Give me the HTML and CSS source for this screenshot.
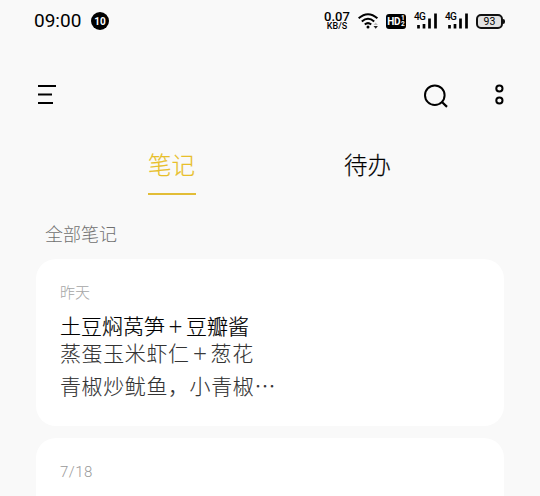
FILE: index.html
```html
<!DOCTYPE html>
<html lang="zh-CN">
<head>
<meta charset="utf-8">
<title>笔记</title>
<link rel="stylesheet" href="styles.css">
</head>
<body>
<header class="status">
  <span class="clock">09:00</span>
  <span class="badge">10</span>
  <div class="status-right">
    <div class="speed"><b>0.07</b><span>KB/S</span></div>
    <svg class="wifi" width="21" height="18" viewBox="0 0 21 18">
      <g fill="none" stroke="#000" stroke-width="2">
        <path d="M.6 6.3Q10 -1.9 19.4 6.3"/><path d="M3.8 9.6Q10 4 16.2 9.6"/><path d="M6.8 12.6Q10 9.6 13.2 12.6"/>
      </g>
      <circle cx="10" cy="15" r="1.5"/>
      <path d="M15.5 13l2.2-2.5 2.2 2.5z" fill="#bbb"/><path d="M15.5 14h4.4l-2.2 2.8z" fill="#222"/>
    </svg>
    <div class="hd"><span class="hd-text">HD</span><span class="hd-nums"><i>1</i><i>2</i></span></div>
    <div class="signal"><span class="net">4G</span><svg width="24" height="16" viewBox="0 0 24 16"><path d="M4.5 12v3.5M10 11v4.5M15.5 5.5v10M21.5 .5v15" stroke="#000" stroke-width="2.7"/></svg></div>
    <div class="signal"><span class="net">4G</span><svg width="24" height="16" viewBox="0 0 24 16"><path d="M4.5 12v3.5M10 11v4.5M15.5 5.5v10M21.5 .5v15" stroke="#000" stroke-width="2.7"/></svg></div>
    <div class="battery">93</div>
  </div>
</header>
<nav class="toolbar">
  <svg class="menu" width="20" height="22" viewBox="0 0 20 22"><path d="M0 2h18M0 19h15" stroke="#000" stroke-width="2"/><path d="M0 10.5h14" stroke="#000" stroke-width="2"/></svg>
  <svg class="search" width="26" height="26" viewBox="0 0 26 26"><g fill="none" stroke="#000" stroke-width="2"><circle cx="11.8" cy="11.2" r="9.8"/><path d="M18.7 17.8l5.3 5.1" stroke-width="2.2"/></g></svg>
  <svg class="more" width="10" height="22" viewBox="0 0 10 22"><g fill="none" stroke="#000" stroke-width="2"><circle cx="5.4" cy="4.5" r="3.1"/><circle cx="5.4" cy="16.5" r="3.1"/></g></svg>
</nav>
<div class="tabs">
  <div class="tab active">笔记</div>
  <div class="tab">待办</div>
</div>
<main>
  <h2 class="section">全部笔记</h2>
  <article class="card">
    <div class="date">昨天</div>
    <h3 class="title">土豆焖莴笋<span class="plus">＋</span>豆瓣酱</h3>
    <p class="line">蒸蛋玉米虾仁<span class="plus">＋</span>葱花</p>
    <p class="line last">青椒炒鱿鱼，小青椒…</p>
  </article>
  <article class="card next">
    <div class="date number">7/18</div>
  </article>
</main>
</body>
</html>
```
FILE: styles.css
```css
* { box-sizing: border-box; margin: 0; padding: 0; }
body { width: 540px; height: 496px; overflow: hidden; background: #f9f9f9; color: #000; font-family: "Noto Sans CJK SC", sans-serif; font-weight: 300; }
svg { display: block; flex: none; }
.status { height: 42px; display: flex; align-items: center; padding: 0 34px; font-family: Roboto, sans-serif; }
.clock { width: 57px; flex: none; font-weight: 400; font-size: 19px; line-height: 20px; white-space: nowrap; }
.badge { width: 18px; height: 18px; flex: none; border-radius: 50%; background: #000; color: #fff; font: 700 10px/19px Roboto, sans-serif; text-align: center; }
.status-right { margin-left: auto; display: flex; align-items: center; height: 18px; }
.speed { width: 26px; margin-right: 8px; text-align: center; }
.speed b, .speed span { display: block; white-space: nowrap; }
.speed b { font: 500 13px/11px Roboto, sans-serif; }
.speed span { font: 500 9px/9px Roboto, sans-serif; }
.wifi { margin-right: 7px; }
.hd { width: 20px; height: 15px; margin-right: 8px; border-radius: 3px; background: #000; color: #fff; display: flex; align-items: center; justify-content: center; }
.hd-text { font: 700 10px/15px Roboto, sans-serif; letter-spacing: -.5px; }
.hd-nums { margin-left: 1px; }
.hd-nums i { display: block; font: 700 6.5px/6px Roboto, sans-serif; }
.signal { position: relative; width: 24px; margin-right: 7px; }
.net { position: absolute; left: 0; top: -1px; font: 500 10px/10px Roboto, sans-serif; letter-spacing: -.7px; }
.battery { position: relative; width: 27px; height: 15px; margin-right: 3px; border: 2px solid #111; border-radius: 5px; background: #e2e2e2; font: 400 10.5px/12px Roboto, sans-serif; text-align: center; }
.battery::after { content: ""; position: absolute; right: -4px; top: 3px; width: 2px; height: 5px; border-radius: 0 2px 2px 0; background: #111; }
.toolbar { height: 106px; padding: 42px 36px 0 38px; display: flex; align-items: flex-start; }
.search { margin-left: auto; margin-right: 45px; }
.tabs { height: 47px; display: flex; justify-content: center; gap: 148px; }
.tab { width: 48px; height: 47px; font-size: 23.5px; line-height: 33px; -webkit-text-stroke: .2px currentColor; }
.active { color: #e8bf2a; border-bottom: 2px solid #e2bd37; }
main { height: 301px; padding: 26px 36px 0; overflow: hidden; }
.section { height: 38px; padding-left: 9px; color: #707070; font-size: 18px; line-height: 24px; font-weight: 300; }
.card { height: 167px; margin-bottom: 12px; padding: 22px 24px; border-radius: 20px; background: #fff; }
.next { height: 58px; margin-bottom: 0; border-radius: 20px 20px 0 0; }
.date { height: 30px; color: #a5a5a5; font-size: 15px; line-height: 22px; }
.number { font: 300 15px/24px Roboto, sans-serif; letter-spacing: .5px; color: #999; }
.title { height: 28px; font-size: 21px; line-height: 28px; font-weight: 300; -webkit-text-stroke: .2px currentColor; white-space: nowrap; }
.line { height: 27px; color: #333; font-size: 21px; line-height: 27px; letter-spacing: .6px; white-space: nowrap; -webkit-text-stroke: .1px currentColor; }
.last { margin-top: 6px; }
.plus { display: inline-block; width: 21px; font-size: 15px; line-height: 20px; letter-spacing: 0; text-align: center; vertical-align: 2px; -webkit-text-stroke: .3px currentColor; }
```
